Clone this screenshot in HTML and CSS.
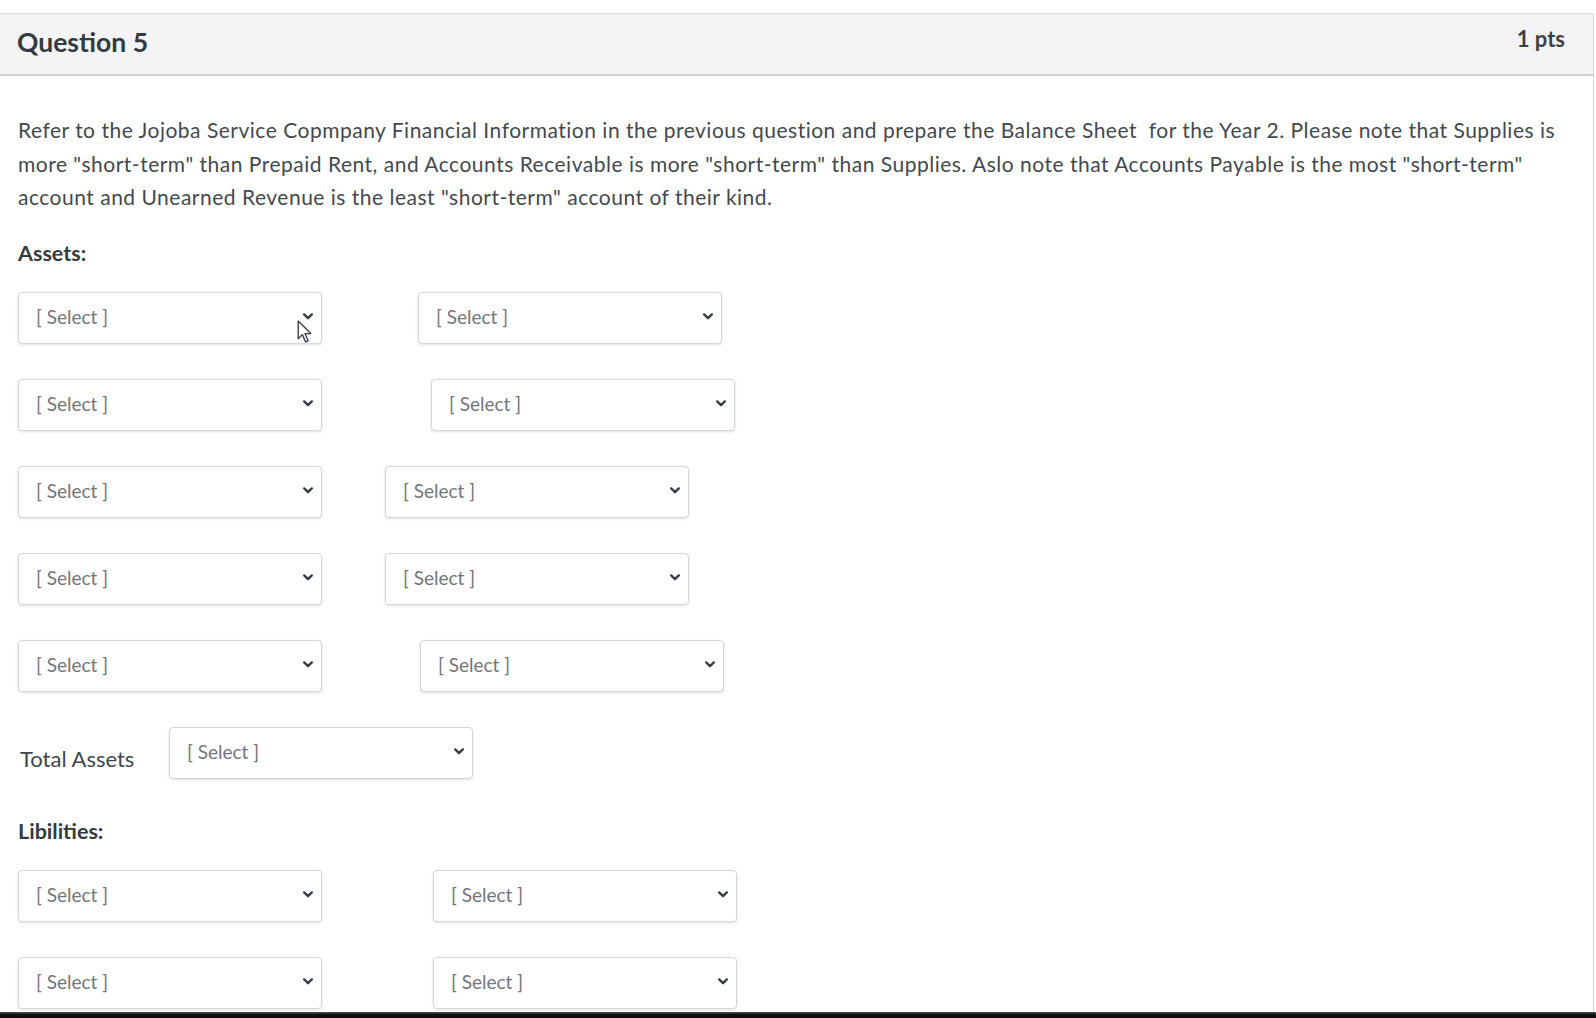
FILE: index.html
```html
<!DOCTYPE html>
<html lang="en">
<head>
<meta charset="utf-8">
<title>Question 5</title>
<link rel="stylesheet" href="styles.css">
</head>
<body>
<div class="page">
  <div class="question">
    <div class="q-header">
      <h2 class="q-title">Question 5</h2>
      <span class="q-points">1 pts</span>
    </div>
    <div class="q-body">
      <p class="q-text">Refer to the Jojoba Service Copmpany Financial Information in the previous question and prepare the Balance Sheet &nbsp;for the Year 2. Please note that Supplies is more "short-term" than Prepaid Rent, and Accounts Receivable is more "short-term" than Supplies. Aslo note that Accounts Payable is the most "short-term" account and Unearned Revenue is the least "short-term" account of their kind.</p>

      <div class="section-label">Assets:</div>

      <div class="row">
        <div class="select hovered"><span>[ Select ]</span><svg viewBox="0 0 10 7" class="chev"><path d="M1.2 1.4 L5 5.2 L8.8 1.4"/></svg>
          <svg class="cursor" viewBox="0 0 14 22"><path d="M1 1 L1 18 L5 14 L8 21 L10.5 20 L7.5 13 L13 13 Z"/></svg>
        </div>
        <div class="select g96"><span>[ Select ]</span><svg viewBox="0 0 10 7" class="chev"><path d="M1.2 1.4 L5 5.2 L8.8 1.4"/></svg></div>
      </div>
      <div class="row">
        <div class="select"><span>[ Select ]</span><svg viewBox="0 0 10 7" class="chev"><path d="M1.2 1.4 L5 5.2 L8.8 1.4"/></svg></div>
        <div class="select g109"><span>[ Select ]</span><svg viewBox="0 0 10 7" class="chev"><path d="M1.2 1.4 L5 5.2 L8.8 1.4"/></svg></div>
      </div>
      <div class="row">
        <div class="select"><span>[ Select ]</span><svg viewBox="0 0 10 7" class="chev"><path d="M1.2 1.4 L5 5.2 L8.8 1.4"/></svg></div>
        <div class="select g63"><span>[ Select ]</span><svg viewBox="0 0 10 7" class="chev"><path d="M1.2 1.4 L5 5.2 L8.8 1.4"/></svg></div>
      </div>
      <div class="row">
        <div class="select"><span>[ Select ]</span><svg viewBox="0 0 10 7" class="chev"><path d="M1.2 1.4 L5 5.2 L8.8 1.4"/></svg></div>
        <div class="select g63"><span>[ Select ]</span><svg viewBox="0 0 10 7" class="chev"><path d="M1.2 1.4 L5 5.2 L8.8 1.4"/></svg></div>
      </div>
      <div class="row">
        <div class="select"><span>[ Select ]</span><svg viewBox="0 0 10 7" class="chev"><path d="M1.2 1.4 L5 5.2 L8.8 1.4"/></svg></div>
        <div class="select g98"><span>[ Select ]</span><svg viewBox="0 0 10 7" class="chev"><path d="M1.2 1.4 L5 5.2 L8.8 1.4"/></svg></div>
      </div>

      <div class="row total-row">
        <span class="total-label">Total Assets</span>
        <div class="select"><span>[ Select ]</span><svg viewBox="0 0 10 7" class="chev"><path d="M1.2 1.4 L5 5.2 L8.8 1.4"/></svg></div>
      </div>

      <div class="section-label lib">Libilities:</div>

      <div class="row">
        <div class="select"><span>[ Select ]</span><svg viewBox="0 0 10 7" class="chev"><path d="M1.2 1.4 L5 5.2 L8.8 1.4"/></svg></div>
        <div class="select g111"><span>[ Select ]</span><svg viewBox="0 0 10 7" class="chev"><path d="M1.2 1.4 L5 5.2 L8.8 1.4"/></svg></div>
      </div>
      <div class="row last">
        <div class="select"><span>[ Select ]</span><svg viewBox="0 0 10 7" class="chev"><path d="M1.2 1.4 L5 5.2 L8.8 1.4"/></svg></div>
        <div class="select g111"><span>[ Select ]</span><svg viewBox="0 0 10 7" class="chev"><path d="M1.2 1.4 L5 5.2 L8.8 1.4"/></svg></div>
      </div>
    </div>
  </div>
  <div class="screen-edge"></div>
</div>
</body>
</html>
```

FILE: styles.css
```css
* { box-sizing: border-box; }

html, body {
  margin: 0;
  padding: 0;
  background: #ffffff;
}

body {
  font-family: Lato, "Open Sans", "Liberation Sans", sans-serif;
  color: #3b4247;
  width: 1596px;
  height: 1018px;
  overflow: hidden;
}

.page {
  padding-top: 13px;
  height: 1018px;
  display: flex;
  flex-direction: column;
}

.question {
  flex: 1;
  width: 1594px;
  border-right: 1px solid #d4d7da;
}

.q-header {
  height: 63px;
  display: flex;
  align-items: center;
  justify-content: space-between;
  padding: 0 28px 4px 17px;
  background: #f4f4f7;
  border-top: 1px solid #dcdee2;
  border-bottom: 2px solid #c9ced2;
}

.q-title {
  margin: 0;
  font-size: 26.5px;
  font-weight: 700;
  color: #333b41;
}

.q-points {
  font-size: 22px;
  font-weight: 700;
  color: #3b4247;
  margin-top: -8px;
}

.q-body {
  padding: 37px 0 0 18px;
}

.q-text {
  margin: 0;
  width: 1560px;
  font-size: 21px;
  letter-spacing: 0.5px;
  line-height: 33.6px;
  color: #43494e;
}

.section-label {
  margin-top: 25px;
  font-size: 21.5px;
  line-height: 28px;
  font-weight: 700;
  color: #333b41;
}

.section-label.lib {
  margin-top: 38px;
}

.row {
  display: flex;
  align-items: center;
  margin-top: 25px;
}

.row + .row {
  margin-top: 35px;
}

.select {
  position: relative;
  width: 304px;
  height: 52px;
  display: flex;
  align-items: center;
  justify-content: space-between;
  padding: 0 8px 2px 17px;
  background: #ffffff;
  border: 1px solid #d3d7da;
  border-radius: 4px;
  box-shadow: 0 1px 3px rgba(0, 0, 0, 0.12);
  font-size: 19px;
  color: #72767a;
}

.chev {
  width: 10px;
  height: 7px;
  fill: none;
  stroke: #3a3f44;
  stroke-width: 2.4;
  stroke-linecap: round;
  stroke-linejoin: round;
}

.cursor {
  position: absolute;
  left: 278px;
  top: 27px;
  width: 15px;
  height: 23px;
  fill: #ffffff;
  stroke: #3a3f44;
  stroke-width: 1.3;
  stroke-linejoin: round;
}

.g63 { margin-left: 63px; }
.g96 { margin-left: 96px; }
.g98 { margin-left: 98px; }
.g109 { margin-left: 109px; }
.g111 { margin-left: 111px; }

.total-row {
  align-items: flex-end;
}

.total-label {
  font-size: 22px;
  line-height: 28px;
  color: #40474c;
  padding-bottom: 6px;
  margin-left: 2px;
  width: 149px;
}

.screen-edge {
  height: 6px;
  background: linear-gradient(#55585a, #111213 40%, #0c0c0d);
}
```
